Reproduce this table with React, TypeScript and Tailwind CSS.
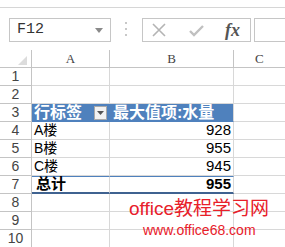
import React from 'react';

const CJK = '"Liberation Sans", "Noto Sans CJK SC", sans-serif';

type Row = { n: number; a?: string; b?: string; kind?: 'head' | 'total' | 'item' };

const ROWS: Row[] = [
  { n: 1 },
  { n: 2 },
  { n: 3, a: '行标签', b: '最大值项:水量', kind: 'head' },
  { n: 4, a: 'A楼', b: '928', kind: 'item' },
  { n: 5, a: 'B楼', b: '955', kind: 'item' },
  { n: 6, a: 'C楼', b: '945', kind: 'item' },
  { n: 7, a: '总计', b: '955', kind: 'total' },
  { n: 8 },
  { n: 9 },
  { n: 10 },
];

function FormulaBar() {
  return (
    <div className="relative h-[43px] border-t border-[#d6d6d6] mt-[7px]">
      {/* name box */}
      <div className="absolute left-[9px] top-[10px] w-[102px] h-[24px] border border-[#c6c6c6] flex items-center pl-[7px]">
        <span className="text-[15px] text-[#333]" style={{ fontFamily: '"Liberation Mono", monospace' }}>F12</span>
        <svg className="absolute right-[7px] top-[9px]" width="8" height="5" viewBox="0 0 8 5">
          <path d="M0 0 L8 0 L4 5 Z" fill="#8a8a8a" />
        </svg>
      </div>
      {/* grip dots */}
      <div className="absolute left-[125px] top-[14px] flex flex-col gap-[4px]">
        <div className="w-[2px] h-[2px] bg-[#c8c8c8]" />
        <div className="w-[2px] h-[2px] bg-[#c8c8c8]" />
        <div className="w-[2px] h-[2px] bg-[#c8c8c8]" />
      </div>
      {/* buttons */}
      <div className="absolute left-[142px] top-[10px] w-[109px] h-[24px] border border-[#c6c6c6] flex items-center">
        <svg className="ml-[9px]" width="14" height="14" viewBox="0 0 14 14">
          <path d="M1 1 L13 13 M13 1 L1 13" stroke="#b4b4b4" strokeWidth="1.6" />
        </svg>
        <svg className="ml-[23px]" width="15" height="13" viewBox="0 0 15 13">
          <path d="M1 7 L5 11 L14 2" stroke="#c0c0c0" strokeWidth="2.4" fill="none" />
        </svg>
        <span
          className="ml-[21px] text-[18px] font-bold italic text-[#555] leading-none"
          style={{ fontFamily: '"Liberation Serif", serif' }}
        >
          fx
        </span>
      </div>
      <div className="absolute left-[254px] top-[10px] w-[40px] h-[24px] border border-[#c6c6c6]" />
    </div>
  );
}

function Sheet() {
  const serif = { fontFamily: '"Liberation Serif", serif' };
  return (
    <div className="grid grid-cols-[32px_78px_124px_1fr]">
      {/* column headers */}
      <div className="h-[18px] border-r border-b border-[#c4c4c4] relative">
        <svg className="absolute right-[4px] bottom-[2px]" width="9" height="9" viewBox="0 0 9 9">
          <path d="M9 0 L9 9 L0 9 Z" fill="#dcdcdc" />
        </svg>
      </div>
      <div className="h-[18px] border-r border-b border-[#c4c4c4] flex items-center justify-center text-[13px] text-[#444]" style={serif}>A</div>
      <div className="h-[18px] border-r border-b border-[#c4c4c4] flex items-center justify-center text-[13px] text-[#444]" style={serif}>B</div>
      <div className="h-[18px] border-b border-[#c4c4c4] flex items-center pl-[21px] text-[13px] text-[#444]" style={serif}>C</div>

      {ROWS.map((r) => {
        const head = r.kind === 'head';
        const total = r.kind === 'total';
        const aBorder = total
          ? 'border-b-2 border-b-[#3f6290] border-t border-t-[#4f81bd]'
          : head
            ? 'border-b border-b-[#4f81bd]'
            : 'border-b border-b-[#d8d8d8]';
        return (
          <React.Fragment key={r.n}>
            <div className="h-[18px] border-r border-b border-[#c4c4c4] flex items-center justify-center text-[14px] text-[#444]" style={{ fontFamily: '"Liberation Sans", sans-serif' }}>
              {r.n}
            </div>
            <div
              className={`h-[18px] flex items-center pl-[2px] text-[14px] ${aBorder} ${
                head ? 'bg-[#4f81bd] text-white font-bold' : 'border-r border-r-[#d8d8d8] text-black'
              } ${total ? 'font-bold' : ''}`}
              style={{ fontFamily: CJK }}
            >
              <span className={head ? 'text-[16px]' : total ? 'text-[15px] pl-[2px]' : ''}>{r.a}</span>
              {head && (
                <span className="ml-[12px] w-[13px] h-[14px] bg-[#f2f2f2] border border-[#a9a9a9] flex items-center justify-center">
                  <svg width="7" height="4" viewBox="0 0 7 4">
                    <path d="M0 0 L7 0 L3.5 4 Z" fill="#555" />
                  </svg>
                </span>
              )}
            </div>
            <div
              className={`h-[18px] flex items-center border-r border-r-[#d8d8d8] ${aBorder} ${
                head ? 'bg-[#4f81bd] text-white font-bold pl-[3px] text-[16px]' : 'justify-end pr-[2px] text-[15px] text-black'
              } ${total ? 'font-bold' : ''}`}
              style={{ fontFamily: head ? CJK : '"Liberation Sans", sans-serif' }}
            >
              {r.b}
            </div>
            <div className="h-[18px] border-b border-[#d8d8d8]" />
          </React.Fragment>
        );
      })}
    </div>
  );
}

export default function App() {
  return (
    <div className="relative w-[285px] h-[247px] overflow-hidden bg-white">
      <FormulaBar />
      <Sheet />
      {/* watermark */}
      <div className="absolute left-[129px] top-[199px] text-[19px] leading-none text-[#e8202a] whitespace-nowrap" style={{ fontFamily: CJK }}>
        office教程学习网
      </div>
      <div className="absolute left-[143px] top-[223px] text-[14px] leading-none text-[#e8202a] whitespace-nowrap" style={{ fontFamily: '"Liberation Sans", sans-serif' }}>
        www.office68.com
      </div>
    </div>
  );
}
